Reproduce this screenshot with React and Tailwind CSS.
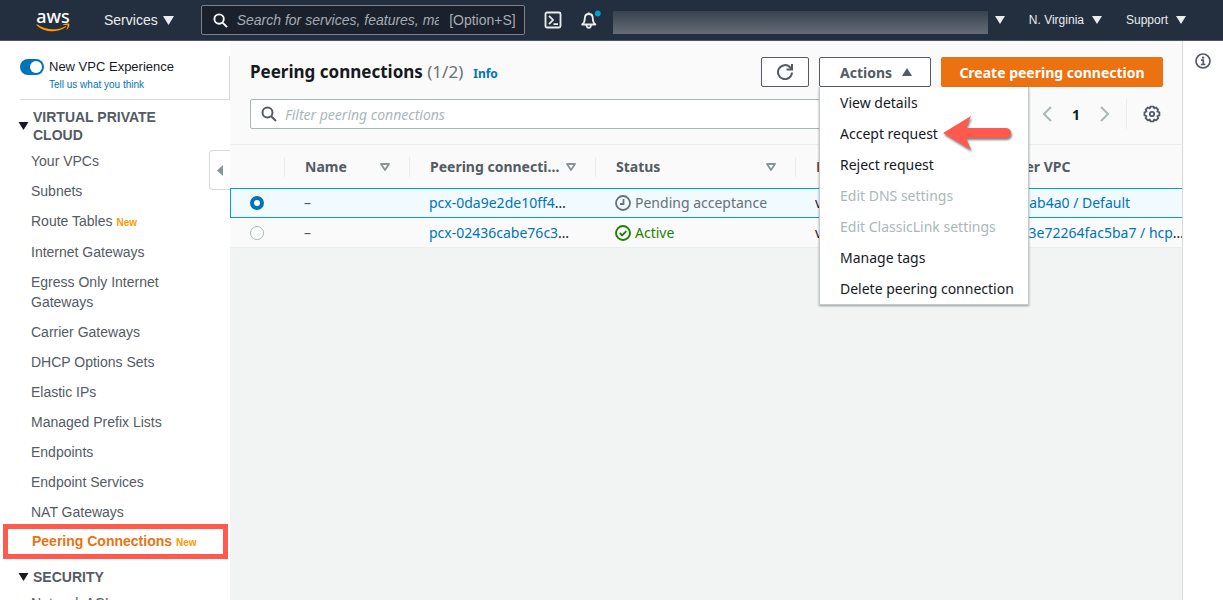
import React, { useState } from "react";

const vpcLinks = [
  { label: "Your VPCs" },
  { label: "Subnets" },
  { label: "Route Tables", isNew: true },
  { label: "Internet Gateways" },
  { label: "Egress Only Internet Gateways" },
  { label: "Carrier Gateways" },
  { label: "DHCP Options Sets" },
  { label: "Elastic IPs" },
  { label: "Managed Prefix Lists" },
  { label: "Endpoints" },
  { label: "Endpoint Services" },
  { label: "NAT Gateways" },
  { label: "Peering Connections", isNew: true, active: true },
];

const actions = [
  { label: "View details" },
  { label: "Accept request", arrow: true },
  { label: "Reject request" },
  { label: "Edit DNS settings", disabled: true },
  { label: "Edit ClassicLink settings", disabled: true },
  { label: "Manage tags" },
  { label: "Delete peering connection" },
];

const connections = [
  {
    id: "pcx-0da9e2de10ff4",
    status: "pending",
    requester: "vpc-0",
    accepter: "vpc-d8dab4a0 / Default",
  },
  {
    id: "pcx-02436cabe76c3",
    status: "active",
    requester: "vpc-0",
    accepter: "vpc-0d03e72264fac5ba7 / hcp",
    cut: true,
  },
];

const columns = [
  { label: "Name", sortable: true },
  { label: "Peering connecti…", sortable: true },
  { label: "Status", sortable: true },
  { label: "Requester VPC" },
  { label: "Accepter VPC" },
];

const Caret = ({ className }) => (
  <svg viewBox="0 0 10 8" className={className} fill="currentColor">
    <path d="M0 0h10L5 8z" />
  </svg>
);

const SearchIcon = ({ className }) => (
  <svg
    viewBox="0 0 16 16"
    className={className}
    fill="none"
    stroke="currentColor"
    strokeWidth="2"
  >
    <circle cx="6.5" cy="6.5" r="5" />
    <path d="M10.2 10.2L15 15" />
  </svg>
);

const SortIcon = () => (
  <svg
    viewBox="0 0 10 8"
    className="w-[10px] h-2 shrink-0"
    fill="none"
    stroke="#879596"
    strokeWidth="1.8"
    strokeLinejoin="round"
  >
    <path d="M1 1h8L5 7z" />
  </svg>
);

const PendingIcon = () => (
  <svg
    viewBox="0 0 16 16"
    className="size-4 shrink-0"
    fill="none"
    stroke="currentColor"
    strokeWidth="1.8"
  >
    <circle cx="8" cy="8" r="7" />
    <path d="M8.5 4v5H5" />
  </svg>
);

const ActiveIcon = () => (
  <svg
    viewBox="0 0 16 16"
    className="size-4 shrink-0"
    fill="none"
    stroke="currentColor"
    strokeWidth="1.9"
  >
    <circle cx="8" cy="8" r="7" />
    <path d="M4.8 8l2.3 2.3 4.2-4.2" />
  </svg>
);

const Header = () => (
  <header className="flex items-center h-[41px] shrink-0 bg-[#232f3e] border-b border-[#4a5562] text-[#eaeded] font-['Liberation_Sans',sans-serif]">
    <a
      href="#"
      aria-label="aws"
      className="flex flex-col items-center w-[34px] ml-9 text-white"
    >
      <span className="font-['Noto_Sans',sans-serif] font-medium text-[18px] leading-[14px]">
        aws
      </span>
      <svg viewBox="0 0 34 9" className="w-[34px] h-[9px]" fill="#ff9900">
        <path d="M1 1.2C9.500 7.200 20.500 7.800 29 3.400c1-.5 1.500.3.700.9C21 10.200 8 9.600.6 2.200c-.6-.6-.2-1.300.4-1z" />
        <path d="M27 1.600c2-1.200 5.800-1.300 6.300-.6.500.8-.2 4-2.200 5.500-.4.300-.7.100-.5-.3.500-1.100 1.300-3.300.9-3.900-.5-.6-3-.3-4.100-.2-.5 0-.6-.3-.4-.5z" />
      </svg>
    </a>

    <button className="flex items-center gap-[5px] ml-[34px] text-[14px] leading-5">
      Services
      <Caret className="w-[11px] h-[9px]" />
    </button>

    <label className="flex items-center w-[324px] h-[30px] ml-[27px] px-[11px] rounded-xs border border-[#7b828b] bg-[#1a202c]">
      <SearchIcon className="size-[15px] shrink-0 text-white" />
      <input
        type="text"
        aria-label="Search"
        placeholder="Search for services, features, marketplace products, and docs"
        className="w-[202px] ml-[9px] text-[14px] italic bg-transparent outline-none placeholder:text-[#a6acb3]"
      />
      <span className="ml-auto mr-[-3px] text-[14px] text-[#a6acb3] whitespace-nowrap">
        [Option+S]
      </span>
    </label>

    <button aria-label="CloudShell" className="ml-[19px]">
      <svg
        viewBox="0 0 18 18"
        className="size-[18px]"
        fill="none"
        stroke="#eaeded"
        strokeWidth="1.8"
      >
        <rect x="1.500" y="1.500" width="15" height="15" rx="1.500" />
        <path d="M5 4.800L9 9l-4 4.200M9.500 13.200h4.500" />
      </svg>
    </button>
    <button aria-label="Notifications" className="ml-[18px]">
      <svg viewBox="0 0 22 20" className="w-[22px] h-5" fill="none">
        <path
          d="M2.200 14.500c2-1.600 2.600-3 2.600-6 0-2.700 1.500-4.500 4-4.500s4 1.800 4 4.500c0 3 .6 4.400 2.600 6z"
          stroke="#eaeded"
          strokeWidth="1.800"
          strokeLinejoin="round"
        />
        <path
          d="M6.500 15c.2 2 1 2.800 2.300 2.800s2.100-.8 2.300-2.800M8.800 4V2.500"
          stroke="#eaeded"
          strokeWidth="1.800"
        />
        <circle cx="17.800" cy="3.500" r="2.900" fill="#00a1c9" />
      </svg>
    </button>

    <div className="flex-1 h-[23px] mt-1 ml-[11px] bg-linear-to-b from-[#37424e] to-[#666d77]" />
    <button aria-label="Account" className="ml-[7px]">
      <Caret className="w-[10px] h-2" />
    </button>
    <button className="flex items-center gap-2 ml-6 text-[12px] leading-5 whitespace-nowrap">
      N. Virginia
      <Caret className="w-[10px] h-2" />
    </button>
    <button className="flex items-center gap-2 ml-6 mr-[37px] text-[12px] leading-5">
      Support
      <Caret className="w-[10px] h-2" />
    </button>
  </header>
);

const Sidebar = () => {
  const [newExperience, setNewExperience] = useState(true);

  return (
    <aside className="relative w-[230px] shrink-0 bg-white text-[14px] text-[#545b64] font-['Liberation_Sans',sans-serif]">
      <div className="h-full overflow-hidden">
        <div className="h-11 mt-[15px] ml-5 border-b border-r border-[#d5dbdb]">
          <label className="flex items-center gap-[5px] h-5 pt-px text-[13px] text-[#16191f]">
            <input
              type="checkbox"
              checked={newExperience}
              onChange={(e) => setNewExperience(e.target.checked)}
              className="peer sr-only"
            />
            <span className="flex items-center justify-end w-6 h-4 px-[2px] rounded-full bg-[#0073bb]">
              <span className="size-3 rounded-full bg-white" />
            </span>
            New VPC Experience
          </label>
          <a
            href="#"
            className="block ml-[29px] mt-px text-[10px] leading-4 text-[#0073bb]"
          >
            Tell us what you think
          </a>
        </div>

        <h2 className="flex items-center gap-1 mt-2 ml-[18px] pr-12 font-bold leading-[18px]">
          <Caret className="w-[11px] h-2 shrink-0 text-[#16191f]" />
          VIRTUAL PRIVATE CLOUD
        </h2>
        <ul className="mt-[2px]">
          {vpcLinks.map((link) => (
            <li
              key={link.label}
              className={
                link.active
                  ? "flex items-center h-[35px] ml-[3px] mr-[2px] mt-[-3px] pl-6 border-5 border-[#ff5a4d]"
                  : "pl-[31px] pr-12 py-[5px] leading-5"
              }
            >
              <a href="#" className={link.active ? "font-bold text-[#ec7211]" : ""}>
                {link.label}
                {link.isNew && (
                  <span className="ml-1 text-[10px] leading-[18px] font-bold text-[#ff9900]">
                    New
                  </span>
                )}
              </a>
            </li>
          ))}
        </ul>
        <h2 className="flex items-center gap-1 mt-[9px] ml-[18px] font-bold leading-[18px]">
          <Caret className="w-[11px] h-2 shrink-0 text-[#16191f]" />
          SECURITY
        </h2>
        <a href="#" className="block mt-[7px] ml-[31px] leading-5">
          Network ACLs
        </a>
      </div>

      {/* collapse handle */}
      <button
        aria-label="Collapse navigation"
        className="absolute right-0 top-[109px] flex items-center justify-center w-[21px] h-10 rounded-l border border-r-0 border-[#d5dbdb] bg-white"
      >
        <svg viewBox="0 0 6 11" className="w-[6px] h-[11px]" fill="#879596">
          <path d="M6 0v11L0 5.500z" />
        </svg>
      </button>
    </aside>
  );
};

const ActionsMenu = () => (
  <div className="absolute left-0 top-full z-10 w-[210px] bg-white border border-t-0 border-[#c5cbcb] shadow-[0_1px_2px_rgba(0,28,36,0.4)]">
    {actions.map((item) => (
      <button
        key={item.label}
        disabled={item.disabled}
        className="relative block w-full h-[31px] pl-5 text-left text-[14px] leading-[31px] text-[#16191f] whitespace-nowrap disabled:text-[#aab7b8]"
      >
        {item.label}
        {item.arrow && (
          <svg
            viewBox="0 0 72 40"
            className="absolute left-[122px] top-[-4px] w-[72px] h-10 drop-shadow-[1px_2px_1px_rgba(0,0,0,0.5)]"
            fill="#ff5a4d"
          >
            <path d="M1 19L29 2l-5 12h40a5 5 0 0 1 0 10H24l5 12z" />
          </svg>
        )}
      </button>
    ))}
  </div>
);

const ConnectionsTable = () => {
  const [selected, setSelected] = useState(connections[0].id);

  return (
    <table className="w-full table-fixed border-separate border-spacing-0 bg-[#fafafa] text-[14px] leading-5 text-left">
      <colgroup>
        <col className="w-[55px]" />
        <col className="w-[125px]" />
        <col className="w-[186px]" />
        <col className="w-[200px]" />
        <col className="w-[162px]" />
        <col />
      </colgroup>
      <thead className="text-[#545b64]">
        <tr className="h-[43px]">
          <th className="p-0">
            <div className="h-5 border-r border-[#eaeded]" />
          </th>
          {columns.map((col) => (
            <th key={col.label} className="group p-0">
              <div className="flex items-center justify-between h-5 pl-5 pr-[19px] border-r border-[#eaeded] group-last:border-r-0 font-bold whitespace-nowrap">
                {col.label}
                {col.sortable && <SortIcon />}
              </div>
            </th>
          ))}
        </tr>
      </thead>
      <tbody>
        {connections.map((c) => (
          <tr
            key={c.id}
            className={
              selected === c.id
                ? "h-[30px] bg-[#f1faff] *:border-y *:border-[#00a1c9] *:first:border-l"
                : "h-[30px] *:border-b *:border-[#eaeded] *:first:border-l *:first:border-l-[#fafafa]"
            }
          >
            <td className="p-0 pl-[19px] align-middle">
              <input
                type="radio"
                name="connection"
                aria-label={c.id}
                checked={selected === c.id}
                onChange={() => setSelected(c.id)}
                className="block size-[14px] appearance-none rounded-full bg-white border border-[#aab7b8] checked:border-4 checked:border-[#0073bb]"
              />
            </td>
            <td className="p-0 pl-[19px] text-[#545b64]">–</td>
            <td className="p-0 pl-[19px] whitespace-nowrap">
              <a href="#" className="text-[#0073bb]">
                {c.id}
              </a>
              …
            </td>
            <td className="p-0 pl-[19px]">
              {c.status === "pending" ? (
                <span className="flex items-center gap-1 text-[#687078] whitespace-nowrap">
                  <PendingIcon />
                  Pending acceptance
                </span>
              ) : (
                <span className="flex items-center gap-1 text-[#1d8102]">
                  <ActiveIcon />
                  Active
                </span>
              )}
            </td>
            <td className="p-0 pl-[19px]">{c.requester}</td>
            <td className="p-0 pl-[19px] whitespace-nowrap overflow-hidden">
              <a href="#" className="text-[#0073bb]">
                {c.accepter}
              </a>
              {c.cut && "…"}
            </td>
          </tr>
        ))}
      </tbody>
    </table>
  );
};

const App = () => (
  <div className="flex flex-col h-screen overflow-hidden bg-[#f2f3f3] text-[#16191f] font-['Noto_Sans',sans-serif]">
    <Header />
    <div className="flex flex-1 min-h-0">
      <Sidebar />

      <main className="flex-1 min-w-0">
        <div className="bg-[#fafafa] pt-4 pb-[15px] pl-5 pr-[19px] border-b border-[#eaeded]">
          <div className="flex items-center gap-[10px]">
            <h1 className="text-[17px] leading-[30px] font-bold whitespace-nowrap">
              Peering connections{" "}
              <span className="font-normal text-[#687078]">(1/2)</span>
            </h1>
            <a href="#" className="pt-1 text-[12px] font-bold text-[#0073bb]">
              Info
            </a>
            <button
              aria-label="Refresh"
              className="flex items-center justify-center w-12 h-[30px] ml-auto rounded-xs border border-[#545b64] bg-white"
            >
              <svg
                viewBox="0 0 16 16"
                className="size-4"
                fill="none"
                stroke="#545b64"
                strokeWidth="2"
              >
                <path d="M15 8.500A7 7 0 1 1 13 3.200L14.500 5" />
                <path d="M15 0v5.500H9.500" />
              </svg>
            </button>
            <div className="relative">
              <button className="flex items-center justify-between w-28 h-[30px] pl-5 pr-[18px] rounded-xs border border-[#545b64] bg-white text-[14px] font-bold text-[#545b64]">
                Actions
                <Caret className="w-[10px] h-2 rotate-180" />
              </button>
              <ActionsMenu />
            </div>
            <button className="w-[222px] h-[30px] rounded-xs bg-[#ec7211] text-[14px] font-bold text-white whitespace-nowrap">
              Create peering connection
            </button>
          </div>

          <div className="flex items-center mt-3">
            <label className="flex items-center flex-1 h-[30px] px-[10px] rounded-xs border border-[#aab7b8] bg-white">
              <SearchIcon className="size-4 shrink-0 text-[#545b64]" />
              <input
                type="text"
                aria-label="Filter peering connections"
                placeholder="Filter peering connections"
                className="flex-1 ml-2 text-[14px] italic outline-none placeholder:text-[#aab7b8]"
              />
            </label>
            <button aria-label="Previous page" className="ml-[50px]">
              <svg
                viewBox="0 0 10 16"
                className="w-[10px] h-4"
                fill="none"
                stroke="#aab7b8"
                strokeWidth="2"
              >
                <path d="M9 1L2 8l7 7" />
              </svg>
            </button>
            <span className="w-12 text-center text-[14px] font-bold">1</span>
            <button aria-label="Next page">
              <svg
                viewBox="0 0 10 16"
                className="w-[10px] h-4"
                fill="none"
                stroke="#aab7b8"
                strokeWidth="2"
              >
                <path d="M1 1l7 7-7 7" />
              </svg>
            </button>
            <div className="h-[30px] ml-4 border-l border-[#eaeded]" />
            <button aria-label="Preferences" className="ml-4 mr-[2px]">
              <svg
                viewBox="0.1 -0.4 15.800 15.800"
                className="size-[18px]"
                fill="none"
                stroke="#545b64"
                strokeWidth="1.600"
                strokeLinejoin="round"
              >
                <path d="M6.600 1h2.800l.5 1.500 1.600-.7 1.900 1.900-.7 1.600 1.800.7v2.800l-1.800.6.8 1.700-1.900 2-1.700-.8-.6 1.700H6.600L6 12.300l-1.700.8-1.900-2 .8-1.700L1.400 8.800V6l1.800-.7-.8-1.600 2-1.900 1.600.7z" />
                <circle cx="8" cy="7.500" r="1.900" />
              </svg>
            </button>
          </div>
        </div>

        <ConnectionsTable />
      </main>

      <aside className="flex items-start justify-center w-[41px] shrink-0 pt-3 bg-white border-l border-[#d5dbdb]">
        <button aria-label="Help">
          <svg viewBox="0 0 16 16" className="size-4" fill="none">
            <circle cx="8" cy="8" r="7" stroke="#545b64" strokeWidth="1.700" />
            <circle cx="8" cy="4.600" r="1.200" fill="#545b64" />
            <path
              d="M6 7.200h2.300V11M5.800 11.500h4.600"
              stroke="#545b64"
              strokeWidth="1.700"
            />
          </svg>
        </button>
      </aside>
    </div>
  </div>
);

export default App;
